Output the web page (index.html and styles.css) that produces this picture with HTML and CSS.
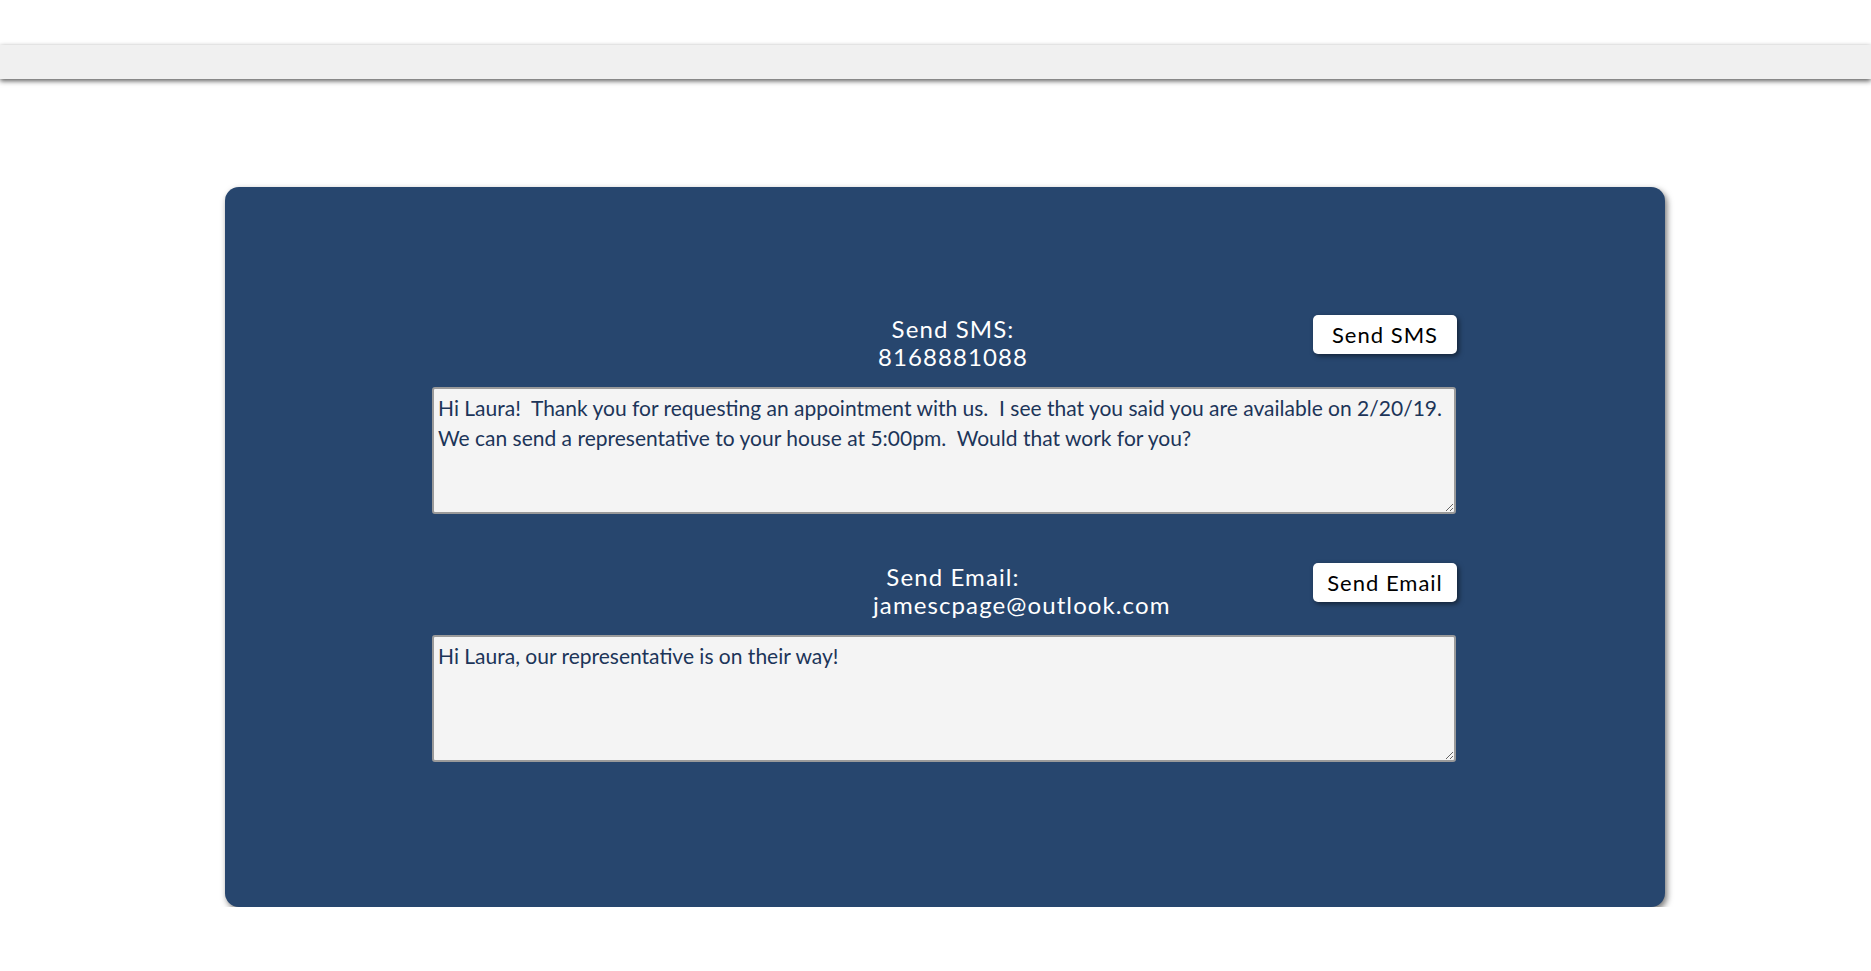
FILE: index.html
```html
<!DOCTYPE html>
<html>
<head>
<meta charset="utf-8">
<link rel="stylesheet" href="styles.css">
</head>
<body>
<div class="topbar"></div>
<main class="card">
  <div class="content">
    <section class="block">
      <div class="head">
        <div class="label">Send SMS:<br>8168881088</div>
        <button class="btn">Send SMS</button>
      </div>
      <textarea class="msg">Hi Laura!  Thank you for requesting an appointment with us.  I see that you said you are available on 2/20/19.  We can send a representative to your house at 5:00pm.  Would that work for you?</textarea>
    </section>
    <section class="block second">
      <div class="head">
        <div class="label">Send Email:<br>jamescpage@outlook.com</div>
        <button class="btn">Send Email</button>
      </div>
      <textarea class="msg">Hi Laura, our representative is on their way!</textarea>
    </section>
  </div>
</main>
</body>
</html>
```
FILE: styles.css
```css
html, body {
  margin: 0;
  padding: 0;
  background: #ffffff;
}
body {
  font-family: "Lato", "Liberation Sans", sans-serif;
}
.topbar {
  margin-top: 45px;
  height: 34px;
  background: #f0f0f0;
  box-shadow: 0 2px 5px rgba(0, 0, 0, 0.65);
}
.card {
  width: 1440px;
  height: 720px;
  box-sizing: border-box;
  margin: 108px 0 0 225px;
  padding: 128px 0 0 207px;
  background: #27466e;
  border-radius: 14px;
  box-shadow: 2px 3px 6px rgba(0, 0, 0, 0.55);
}
.content {
  width: 1024px;
}
.block.second {
  margin-top: 49px;
}
.head {
  display: flex;
  align-items: flex-start;
  margin-bottom: 16px;
}
.label {
  width: 160px;
  margin-left: 441px;
  text-align: center;
  color: #ffffff;
  font-size: 24px;
  line-height: 28px;
  letter-spacing: 1.1px;
}
.btn {
  margin-left: auto;
  margin-right: -1px;
  width: 144px;
  height: 39px;
  padding: 0;
  border: none;
  border-radius: 5px;
  background: #ffffff;
  color: #000000;
  font-family: "Lato", "Liberation Sans", sans-serif;
  font-size: 22px;
  letter-spacing: 1px;
  box-shadow: 2px 2px 5px rgba(0, 0, 0, 0.5);
}
.msg {
  display: block;
  width: 1024px;
  height: 127px;
  box-sizing: border-box;
  margin: 0;
  padding: 4px 4px;
  border: 2px solid #9a9a9a;
  border-radius: 3px;
  background: #f4f4f4;
  color: #1c3559;
  font-family: "Lato", "Liberation Sans", sans-serif;
  font-size: 21px;
  line-height: 30px;
}
```
